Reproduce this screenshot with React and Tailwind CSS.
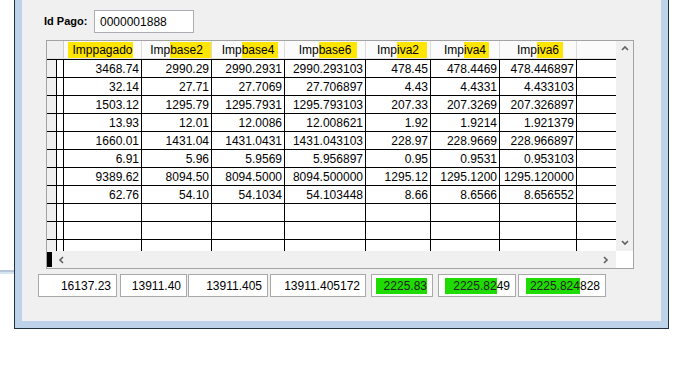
import React from 'react'

const cols = [
  { key: 'pag', w: 'w-[78px]', pre: '', hl: 'Imppagado', hlc: 'pl-[4px] ml-[-4px]' },
  { key: 'b2', w: 'w-[70px]', pre: 'Imp', hl: 'base2', hlc: 'pr-[8px] mr-[-8px]' },
  { key: 'b4', w: 'w-[73px]', pre: 'Imp', hl: 'base4', hlc: 'pr-[4px] mr-[-4px]' },
  { key: 'b6', w: 'w-[81px]', pre: 'Imp', hl: 'base6', hlc: 'pr-[6px] mr-[-6px]' },
  { key: 'i2', w: 'w-[65px]', pre: 'Imp', hl: 'iva2', hlc: 'pr-[8px] mr-[-8px]' },
  { key: 'i4', w: 'w-[69px]', pre: 'Imp', hl: 'iva4', hlc: 'pr-[3px] mr-[-3px]' },
  { key: 'i6', w: 'w-[77px]', pre: 'Imp', hl: 'iva6', hlc: 'pr-[4px] mr-[-4px]' },
]

const rows = [
  ['3468.74', '2990.29', '2990.2931', '2990.293103', '478.45', '478.4469', '478.446897'],
  ['32.14', '27.71', '27.7069', '27.706897', '4.43', '4.4331', '4.433103'],
  ['1503.12', '1295.79', '1295.7931', '1295.793103', '207.33', '207.3269', '207.326897'],
  ['13.93', '12.01', '12.0086', '12.008621', '1.92', '1.9214', '1.921379'],
  ['1660.01', '1431.04', '1431.0431', '1431.043103', '228.97', '228.9669', '228.966897'],
  ['6.91', '5.96', '5.9569', '5.956897', '0.95', '0.9531', '0.953103'],
  ['9389.62', '8094.50', '8094.5000', '8094.500000', '1295.12', '1295.1200', '1295.120000'],
  ['62.76', '54.10', '54.1034', '54.103448', '8.66', '8.6566', '8.656552'],
  ['', '', '', '', '', '', ''],
  ['', '', '', '', '', '', ''],
  ['', '', '', '', '', '', ''],
]

function Chevron({ dir }) {
  const pts = {
    up: '1,5 4,2 7,5',
    down: '1,2 4,5 7,2',
    left: '5,1 2,4 5,7',
    right: '2,1 5,4 2,7',
  }[dir]
  return (
    <svg width="8" height="8" viewBox="0 0 8 8">
      <polyline points={pts} fill="none" stroke="#606060" strokeWidth="1.6" />
    </svg>
  )
}

function TotalBox({ w, gap, children }) {
  return (
    <div className={`${w} ${gap} h-[23px] border border-[#a9a9a9] bg-white flex items-center justify-end pr-[5px] text-black`}>
      {children}
    </div>
  )
}

export default function App() {
  return (
    <div className="w-[680px] h-[388px] bg-white flex font-['Liberation_Sans',Arial,sans-serif] text-[12px] overflow-hidden">
      {/* bit of the window behind */}
      <div className="w-[14px] flex flex-col">
        <div className="mt-[270px] h-[2px] bg-[#b6c6d8]" />
        <div className="h-[2px] bg-[#d6e3f0]" />
      </div>

      {/* dialog frame */}
      <div className="w-[655px] h-[329px] border-x border-b border-[#23313f]">
        <div className="h-full border-x-[7px] border-b-[7px] border-[#bed3ea]">
          <div className="h-full bg-[#f0f0f0] flex flex-col">
            {/* Id Pago */}
            <div className="mt-[10px] ml-[22px] flex items-center">
              <span className="font-bold text-[11px] w-[50px]">Id Pago:</span>
              <div className="w-[100px] h-[23px] border border-[#abadb3] bg-white pl-[5px] flex items-center">
                0000001888
              </div>
            </div>

            {/* scroll pane */}
            <div className="mt-[7px] ml-[24px] w-[588px] h-[229px] border border-[#a3a3a3] flex flex-col">
              <div className="flex h-[210px]">
                <div className="w-[569px] overflow-hidden bg-white">
                  <div className="flex h-[18px] bg-[#fbfbfb] border-b border-[#e2e2e2]">
                    <div className="w-[17px] bg-[#f0f0f0] border-r border-[#d0d0d0]" />
                    {cols.map((c) => (
                      <div key={c.key} className={`${c.w} border-r border-[#dcdcdc] flex items-center justify-center whitespace-nowrap`}>
                        <span>{c.pre}</span>
                        <span className={`inline-block leading-[16px] bg-[#ffe500] ${c.hlc}`}>{c.hl}</span>
                      </div>
                    ))}
                    <div className="w-[39px]" />
                  </div>
                  {rows.map((r, i) => (
                    <div key={i} className="flex h-[18px] border-t border-black">
                      <div className="w-[10px] bg-[#f0f0f0] border-r border-black" />
                      <div className="w-[7px] border-r border-black" />
                      {cols.map((c, j) => (
                        <div key={c.key} className={`${c.w} border-r border-black flex items-center justify-end pr-[2px] whitespace-nowrap`}>
                          {r[j]}
                        </div>
                      ))}
                      <div className="w-[39px]" />
                    </div>
                  ))}
                </div>
                <div className="w-[17px] bg-[#f0f0f0] flex flex-col items-center justify-between pt-[4px] pb-[4px]">
                  <Chevron dir="up" />
                  <Chevron dir="down" />
                </div>
              </div>
              <div className="flex h-[17px]">
                <div className="w-[569px] bg-[#f0f0f0] flex items-center">
                  <div className="w-[5px] h-[15px] bg-black" />
                  <div className="ml-[6px]">
                    <Chevron dir="left" />
                  </div>
                  <div className="ml-auto mr-[6px]">
                    <Chevron dir="right" />
                  </div>
                </div>
                <div className="w-[17px] bg-white" />
              </div>
            </div>

            {/* totals */}
            <div className="mt-[5px] ml-[16px] flex">
              <TotalBox w="w-[79px]" gap="">16137.23</TotalBox>
              <TotalBox w="w-[67px]" gap="ml-[3px]">13911.40</TotalBox>
              <TotalBox w="w-[80px]" gap="ml-[1px]">13911.405</TotalBox>
              <TotalBox w="w-[96px]" gap="ml-[2px]">13911.405172</TotalBox>
              <TotalBox w="w-[62px]" gap="ml-[5px]">
                <span className="inline-block h-[16px] leading-[16px] pl-[8px] bg-[#1fdc00] text-[#222]">2225.83</span>
              </TotalBox>
              <TotalBox w="w-[78px]" gap="ml-[5px]">
                <span className="inline-block h-[16px] leading-[16px] pl-[8px] bg-[#1fdc00] text-[#222]">2225.82</span>
                <span>49</span>
              </TotalBox>
              <TotalBox w="w-[88px]" gap="ml-[2px]">
                <span className="inline-block h-[16px] leading-[16px] pl-[4px] bg-[#1fdc00] text-[#222]">2225.824</span>
                <span>828</span>
              </TotalBox>
            </div>
          </div>
        </div>
      </div>
    </div>
  )
}
